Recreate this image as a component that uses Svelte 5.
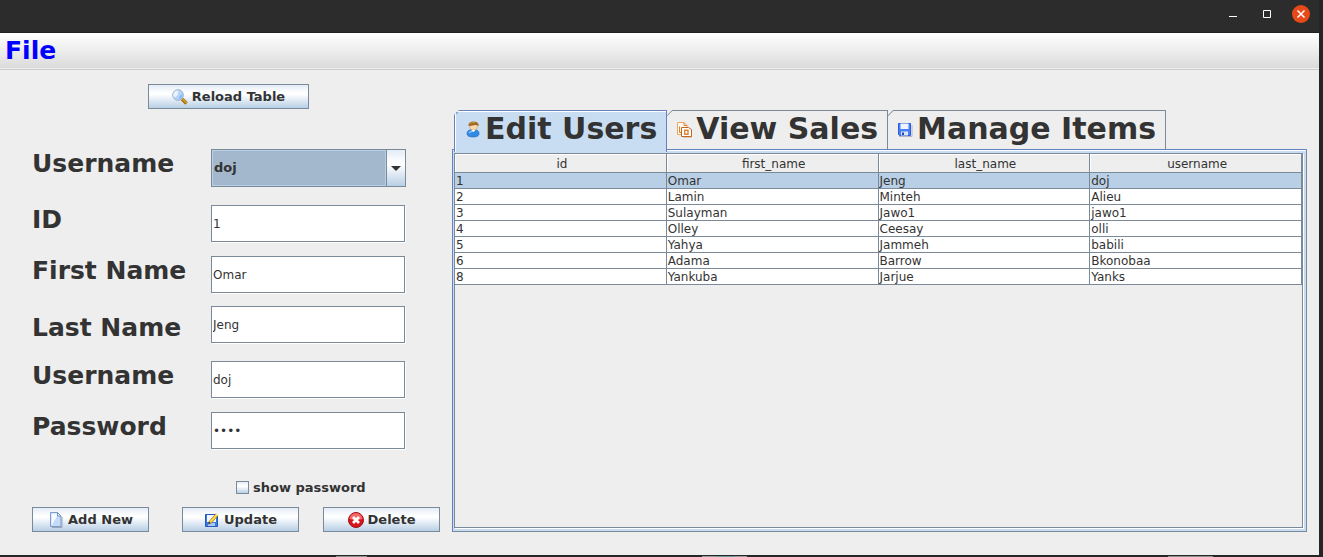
<script>
  let users = $state([
    { id: 1, first_name: 'Omar', last_name: 'Jeng', username: 'doj' },
    { id: 2, first_name: 'Lamin', last_name: 'Minteh', username: 'Alieu' },
    { id: 3, first_name: 'Sulayman', last_name: 'Jawo1', username: 'jawo1' },
    { id: 4, first_name: 'Olley', last_name: 'Ceesay', username: 'olli' },
    { id: 5, first_name: 'Yahya', last_name: 'Jammeh', username: 'babili' },
    { id: 6, first_name: 'Adama', last_name: 'Barrow', username: 'Bkonobaa' },
    { id: 8, first_name: 'Yankuba', last_name: 'Jarjue', username: 'Yanks' }
  ]);

  const columns = ['id', 'first_name', 'last_name', 'username'];
  const tabs = ['Edit Users', 'View Sales', 'Manage Items'];

  let activeTab = $state('Edit Users');
  let selectedName = $state('doj');
  let showPassword = $state(false);
  let form = $state({ id: 1, first_name: 'Omar', last_name: 'Jeng', username: 'doj', password: '1234' });

  // Copy the picked user into the form
  function pick(user) {
    selectedName = user.username;
    form = { ...user, password: form.password };
  }

  function handleSelect() {
    const user = users.find((u) => u.username === selectedName);
    if (user) pick(user);
  }
</script>

<div class="window">
  <header class="titlebar">
    <button class="win-btn" aria-label="Minimize">
      <svg width="18" height="18" viewBox="0 0 18 18"><path d="M5 11.5h8" stroke="#fff" /></svg>
    </button>
    <button class="win-btn" aria-label="Maximize">
      <svg width="18" height="18" viewBox="0 0 18 18"><path d="M5.5 5.5h7v7h-7z" fill="none" stroke="#fff" /></svg>
    </button>
    <button class="win-btn" aria-label="Close">
      <svg width="18" height="18" viewBox="0 0 18 18">
        <circle cx="9" cy="9" r="9" fill="#e64a19" />
        <path d="M5.5 5.5l7 7M12.5 5.5l-7 7" stroke="#fff" stroke-width="1.5" />
      </svg>
    </button>
  </header>

  <nav class="menubar">
    <button class="menu">File</button>
  </nav>

  <main class="content">
    <form class="form" onsubmit={(e) => e.preventDefault()}>
      <button type="button" class="btn reload">
        <svg width="16" height="16" viewBox="0 0 16 16">
          <path d="M10 10l4.500 4.500" stroke="#9a6a08" stroke-width="3.400" />
          <path d="M10.500 10l4 4" stroke="#e0a020" stroke-width="1.600" />
          <circle cx="6" cy="6" r="5.300" fill="#b4d4fa" stroke="#9fb0c8" />
          <path d="M6 1.500A4.500 4.500 0 0 0 2 8.500Q7 7 6 1.500z" fill="#eaf4ff" />
          <path d="M7 10.200A4.500 4.500 0 0 0 10.300 5Q7 6 7 10.200z" fill="#8dbcf8" />
        </svg>
        Reload Table
      </button>

      <div class="row">
        <label for="user-select">Username</label>
        <div class="combo">
          <select id="user-select" bind:value={selectedName} onchange={handleSelect}>
            {#each users as user (user.id)}
              <option value={user.username}>{user.username}</option>
            {/each}
          </select>
          <span class="combo-arrow">
            <svg width="10" height="5" viewBox="0 0 10 5"><path d="M0 0h10L5 5z" fill="#333" /></svg>
          </span>
        </div>
      </div>
      <div class="row spaced">
        <label for="id">ID</label>
        <input id="id" type="text" bind:value={form.id} />
      </div>
      <div class="row">
        <label for="first-name">First Name</label>
        <input id="first-name" type="text" bind:value={form.first_name} />
      </div>
      <div class="row low">
        <label for="last-name">Last Name</label>
        <input id="last-name" type="text" bind:value={form.last_name} />
      </div>
      <div class="row spaced">
        <label for="username">Username</label>
        <input id="username" type="text" bind:value={form.username} />
      </div>
      <div class="row">
        <label for="password">Password</label>
        <input id="password" type={showPassword ? 'text' : 'password'} bind:value={form.password} />
      </div>

      <label class="show">
        <input type="checkbox" bind:checked={showPassword} />
        show password
      </label>

      <div class="actions">
        <button type="button" class="btn">
          <svg width="16" height="16" viewBox="0 0 16 16">
            <path d="M4 15.500h10V5" fill="none" stroke="#9aa6b8" />
            <path d="M2.500.500h7l3.500 3.500v10.500H2.500z" fill="#c4dbf8" stroke="#7d9bcb" />
            <path d="M3.500 13.500V1.500h5.500v3z" fill="#f5faff" />
            <path d="M9.500.500V4H13z" fill="#fff" stroke="#6f90c6" />
          </svg>
          Add New
        </button>
        <button type="button" class="btn">
          <svg width="16" height="16" viewBox="0 0 16 16">
            <path d="M1.500 2.500h12v12h-12z" fill="#3c78e6" stroke="#2457b8" />
            <path d="M3 3h9v7H3z" fill="#f4f8ff" />
            <path d="M4 11h7v3H4z" fill="#a9c8f6" />
            <path d="M6 10.500L13 2.500" stroke="#8a6a10" stroke-width="3.400" />
            <path d="M6 10.500L13 2.500" stroke="#ffd73a" stroke-width="2.400" />
            <path d="M4 12.500l.800-3.200 2.400 2z" fill="#444" />
            <path d="M12 1.500l2 1.700" stroke="#f6efc8" stroke-width="1.500" />
          </svg>
          Update
        </button>
        <button type="button" class="btn">
          <svg width="16" height="16" viewBox="0 0 16 16">
            <circle cx="8" cy="8" r="7.500" fill="#d8141c" stroke="#9c1016" />
            <path d="M1.500 7a6.500 6 0 0 1 13 0Q8 9 1.500 7z" fill="#f4686a" />
            <path d="M5 5l6 6M11 5l-6 6" stroke="#fff" stroke-width="2.800" />
          </svg>
          Delete
        </button>
      </div>
    </form>

    <section class="tabbed">
      <div class="tabs" role="tablist">
        {#each tabs as tab, i}
          <button
            class="tab"
            class:active={tab === activeTab}
            role="tab"
            aria-selected={tab === activeTab}
            onclick={() => (activeTab = tab)}
          >
            <svg width="16" height="18" viewBox="0 0 16 18">
              {#if i === 0}
                <path d="M2 13.500q0-4 6-4t6 4q0 3.500-6 3.500t-6-3.500z" fill="#2f8ae6" stroke="#1c62b4" stroke-width=".600" />
                <path d="M4 13q2-2.500 5-2" fill="none" stroke="#8cc4fa" stroke-width="1.500" />
                <circle cx="8.500" cy="6.500" r="3.800" fill="#fbd9ae" stroke="#c89050" stroke-width=".500" />
                <path d="M3.500 6Q3 1.500 8.500 1.500T13.700 6Q11 4.500 9 5.200T3.500 6z" fill="#a06a24" />
                <path d="M5 3.500q2-1.500 5-1" fill="none" stroke="#c8954a" />
                <path d="M6.500 10l2 2 2-2z" fill="#fff" />
              {:else if i === 1}
                <path d="M1.500 2.500h6.500l3 3v9h-9.500z" fill="#fff8ee" stroke="#e8a868" />
                <path d="M8 2.500v3h3M3.500 6.500v6h2" fill="none" stroke="#dc8434" />
                <path d="M16 10v7H7" fill="none" stroke="#b8aca0" />
                <path d="M5.500 7.500h7l3 2v7h-10z" fill="#fff" stroke="#c9661c" />
                <path d="M8.700 10.200h3.300v4H8.700z" fill="none" stroke="#dc8434" stroke-width="1.400" />
              {:else}
                <path d="M2 16.500h13V5" fill="none" stroke="#b4b8c4" />
                <path d="M1.500 3.500h12v12H2.500l-1-1z" fill="#4a80f4" stroke="#2c5cd8" />
                <path d="M3.500 3.500h8v5.500h-8z" fill="#eef5ff" />
                <path d="M4 11.500h7v4H4z" fill="#dbe6f8" />
                <path d="M5 12.500h2v2.500H5z" fill="#234aa8" />
              {/if}
            </svg>
            {tab}
          </button>
        {/each}
      </div>

      <div class="pane">
        <div class="scroll">
          <table>
            <thead>
              <tr>
                {#each columns as column}
                  <th>{column}</th>
                {/each}
              </tr>
            </thead>
            <tbody>
              {#each users as user (user.id)}
                <tr class:selected={user.username === selectedName} onclick={() => pick(user)}>
                  {#each columns as column}
                    <td>{user[column]}</td>
                  {/each}
                </tr>
              {/each}
            </tbody>
          </table>
        </div>
      </div>
    </section>
  </main>
</div>

<style>
  :global(body) {
    background-color: #262626;
  }

  .window {
    --line: #7a8a99;
    --blue-line: #6382bf;
    --tint: #c8ddf2;
    --metal: linear-gradient(#e4ecf7, #fff 35%, #fff 40%, #b8cfe5);
    box-sizing: border-box;
    min-height: 100vh;
    display: flex;
    flex-direction: column;
    padding: 0 4px 2px 0;
    font: 12px/15px 'DejaVu Sans', sans-serif;
    color: #333;
    /* slivers of the desktop below the window */
    background:
      linear-gradient(#8f918c, #8f918c) 336px 100% / 31px 1px no-repeat,
      linear-gradient(90deg, #999 30%, #6d99a3 30% 70%, #999 70%) 702px 100% / 45px 1px no-repeat,
      linear-gradient(#8f918c, #8f918c) 1168px 100% / 45px 1px no-repeat,
      #262626;
  }

  button,
  input,
  select {
    font: inherit;
    color: inherit;
    margin: 0;
    box-sizing: border-box;
  }

  svg {
    flex-shrink: 0;
  }

  .titlebar {
    display: flex;
    align-items: center;
    justify-content: flex-end;
    gap: 16px;
    height: 33px;
    padding: 0 9px 4px 0;
    box-sizing: border-box;
    background-color: #2c2c2c;
    border-bottom: 1px solid #212121;
  }

  .win-btn {
    display: flex;
    padding: 0;
    border: none;
    background: none;
  }

  .menubar {
    background: linear-gradient(#fff, #dadada);
    border-bottom: 1px solid #ccc;
    box-shadow: inset 0 -1px #eee;
    padding: 0 5px;
  }

  .menu {
    display: block;
    padding: 3px 0;
    border: none;
    background: none;
    font-weight: bold;
    font-size: 25px;
    line-height: 30px;
    color: #00f;
  }

  .content {
    flex: 1;
    display: flex;
    gap: 12px;
    padding: 14px 12px 23px 32px;
    background-color: #eee;
  }

  .form {
    flex: 0 0 408px;
  }

  .btn {
    display: flex;
    align-items: center;
    justify-content: center;
    gap: 4px;
    width: 117px;
    height: 25px;
    padding: 0;
    border: 1px solid var(--line);
    background: var(--metal);
    font-weight: bold;
    font-size: 13px;
    white-space: nowrap;
  }

  .reload {
    width: 161px;
    margin: 0 0 40px 116px;
  }

  .row {
    display: flex;
    align-items: flex-start;
    margin-top: 14px;
  }

  .row.spaced {
    margin-top: 18px;
  }

  .row.low {
    align-items: flex-end;
    margin-top: 13px;
  }

  .row label {
    width: 179px;
    font-weight: bold;
    font-size: 25px;
    line-height: 30px;
  }

  .row input {
    width: 194px;
    height: 37px;
    padding: 0 1px;
    border: 1px solid var(--line);
    background-color: #fff;
    box-shadow: 1px 1px #fff;
    outline: none;
  }

  .combo {
    display: flex;
    width: 195px;
    height: 38px;
    box-sizing: border-box;
    border: 1px solid var(--line);
  }

  .combo select {
    flex: 1;
    appearance: none;
    padding: 0 1px 2px;
    border: 1px solid #b8cfe5;
    border-radius: 0;
    background-color: #a3b8cc;
    font-weight: bold;
    font-size: 13px;
  }

  .combo-arrow {
    display: flex;
    align-items: center;
    justify-content: center;
    width: 18px;
    border-left: 1px solid var(--line);
    background: var(--metal);
    pointer-events: none;
  }

  .show {
    display: flex;
    align-items: center;
    gap: 4px;
    margin: 31px 0 12px 204px;
    font-weight: bold;
    font-size: 13px;
  }

  .show input {
    appearance: none;
    width: 13px;
    height: 13px;
    border: 1px solid var(--line);
    background: var(--metal);
  }

  .show input:checked {
    box-shadow: inset 0 0 0 3px #fff;
    background: #333;
  }

  .actions {
    display: grid;
    grid-template-columns: 150px 141px 117px;
  }

  .tabbed {
    flex: 1;
    min-width: 0;
    display: flex;
    flex-direction: column;
    padding-top: 26px;
  }

  .tabs {
    display: flex;
    align-items: flex-start;
    height: 42px;
    margin-bottom: -3px;
    padding-left: 2px;
    z-index: 1;
  }

  .tab {
    display: flex;
    align-items: center;
    gap: 4px;
    height: 39px;
    padding: 0 9px 2px 9px;
    border: 1px solid var(--line);
    border-width: 1px 1px 0 0;
    /* slanted top left corner */
    background: linear-gradient(135deg, var(--line) 4px, transparent 5px) 0 0 / 12px 12px no-repeat border-box;
    clip-path: polygon(5px 0, 100% 0, 100% 100%, 0 100%, 0 5px);
    font-weight: bold;
    font-size: 30px;
    line-height: 36px;
    white-space: nowrap;
  }

  .tab.active {
    height: 42px;
    padding: 0 9px 5px 10px;
    border-color: var(--blue-line);
    border-left-width: 1px;
    background:
      linear-gradient(135deg, var(--blue-line) 4px, transparent 5px) 0 0 / 12px 12px no-repeat border-box,
      var(--tint);
    box-shadow: inset 1px 1px #fff;
  }

  .pane {
    flex: 1;
    display: flex;
    padding: 3px 3px 3px 1px;
    border: 1px solid var(--line);
    border-top-color: var(--blue-line);
    border-left-color: var(--blue-line);
    background-color: var(--tint);
    box-shadow: inset 0 1px #fff;
  }

  .scroll {
    flex: 1;
    min-width: 0;
    border: 1px solid var(--line);
    background-color: #eee;
    box-shadow: 1px 1px #fff;
  }

  table {
    width: 100%;
    table-layout: fixed;
    border-spacing: 0;
  }

  th,
  td {
    padding: 1px 1px 0;
    border-right: 1px solid var(--line);
    border-bottom: 1px solid var(--line);
    line-height: 14px;
    text-align: left;
  }

  th {
    padding: 3px 0 1px 3px;
    font-weight: normal;
    text-align: center;
    box-shadow: inset 1px 1px #fff;
  }

  td {
    background-color: #fff;
  }

  .selected td {
    background-color: #b8cfe5;
  }
</style>
